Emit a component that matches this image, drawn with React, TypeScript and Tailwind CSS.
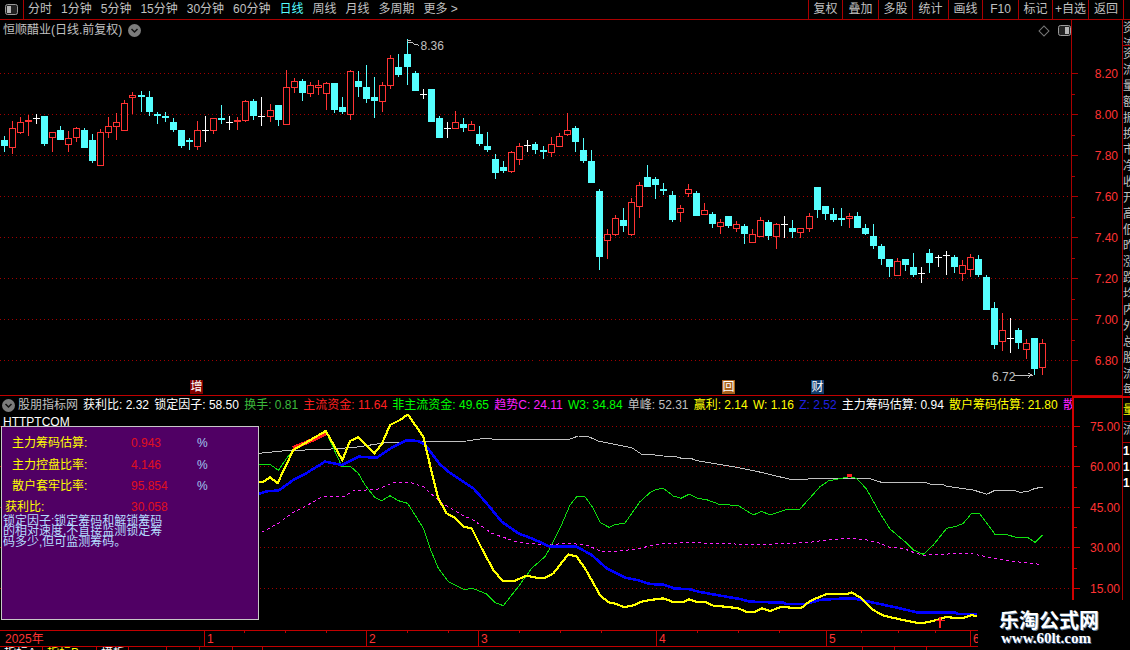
import React from 'react';

// candle rows: type, wick top, body top, body bottom, wick bottom (px in page coords)
type Candle = ['c' | 'r' | 'w', number, number, number, number];

const CANDLES: Candle[] = [
  ['c',136,140,146,152],['r',121,128,148,154],['r',117,122,133,134],['r',115,120,122,136],['w',114,118,118,124],
  ['c',116,116,144,146],['r',132,132,138,152],['c',126,130,140,140],['r',131,138,145,152],['r',127,128,138,142],
  ['c',128,130,148,148],['c',134,140,161,163],['r',129,132,166,166],['r',117,126,133,138],['r',113,122,127,140],
  ['r',100,103,131,131],['r',92,95,98,114],['c',91,95,97,112],['c',91,97,112,116],['c',112,114,116,124],
  ['c',112,116,118,122],['c',118,122,130,132],['c',130,130,146,148],['c',138,140,142,150],['r',121,130,147,150],
  ['w',116,130,130,142],['r',118,118,131,134],['c',105,118,120,124],['w',116,122,122,130],['r',117,120,122,130],
  ['r',100,101,121,122],['c',99,101,116,120],['w',97,116,116,126],['r',104,110,117,122],['c',105,105,120,126],
  ['r',70,87,125,125],['r',78,81,88,93],['c',79,81,93,101],['r',82,85,94,97],['r',80,85,88,95],
  ['r',82,83,94,110],['c',83,83,110,113],['c',97,107,112,114],['r',70,71,115,120],['c',71,81,87,97],
  ['c',65,87,99,103],['c',77,97,101,118],['r',82,85,102,112],['r',55,58,86,89],['c',54,67,75,77],
  ['c',39,54,67,85],['c',71,73,91,91],['w',89,94,94,99],['c',89,89,122,122],['c',116,118,138,138],
  ['w',122,128,128,138],['r',111,122,129,129],['c',118,124,128,132],['r',121,124,131,131],['c',126,134,144,146],
  ['c',132,146,150,152],['c',154,159,173,179],['c',161,167,171,173],['r',151,152,172,173],['r',143,146,160,165],
  ['w',140,145,145,152],['c',142,144,150,154],['c',146,150,152,159],['r',137,144,153,157],['r',133,136,147,147],
  ['r',113,130,135,136],['c',126,128,142,152],['c',138,150,161,163],['c',150,161,183,183],['c',189,191,257,270],
  ['r',229,234,241,259],['r',215,218,235,236],['c',208,220,226,232],['r',198,202,235,236],['r',182,185,207,218],
  ['c',165,177,187,187],['c',177,179,185,199],['c',183,189,191,195],['c',191,195,220,222],['r',205,208,213,222],
  ['r',184,189,194,197],['c',191,193,216,216],['r',203,210,215,215],['c',212,214,224,228],['r',219,222,227,234],
  ['c',216,216,226,228],['r',221,224,229,232],['c',224,226,234,244],['r',229,234,243,243],['r',217,220,237,237],
  ['c',220,222,236,240],['r',223,224,237,249],['w',216,224,224,238],['c',220,228,232,238],['r',228,228,233,238],
  ['r',213,216,229,232],['c',187,187,210,218],['c',206,206,214,220],['c',208,214,220,222],['c',208,218,220,226],
  ['r',213,216,219,228],['c',212,216,228,228],['c',224,228,234,235],['c',224,236,246,249],['c',244,246,259,265],
  ['c',259,259,267,277],['r',258,261,276,276],['c',259,259,265,271],['c',253,267,275,277],['w',267,273,273,283],
  ['c',249,253,263,273],['w',255,257,257,267],['w',251,255,255,275],['c',255,257,267,273],['r',260,265,274,281],
  ['r',254,257,270,277],['c',255,259,275,277],['c',275,277,310,310],['c',302,308,345,349],['r',313,330,342,351],
  ['w',318,338,338,353],['c',328,330,343,349],['r',339,343,350,359],['c',338,338,369,375],['r',339,343,368,375],
];

const JUMPS = [17, 33, 50, 67, 83, 100, 116];
const candleLeft = (k: number) => 1 + 8 * k + JUMPS.filter((j) => j <= k).length;

const toPts = (raw: number[], ox: number, oy: number) => {
  const out: [number, number][] = [];
  for (let i = 0; i < raw.length; i += 2) out.push([ox + raw[i] / 3, oy + raw[i + 1] / 3]);
  return out;
};

// two traced halves of each line, left from x=255 and right from x=650
const series = (a: number[], b: number[]) => {
  const left = toPts(a, 255, 405).filter((p) => p[0] < 650);
  return [...left, ...toPts(b, 650, 430)].map((p) => p.join(',')).join(' ');
};

const GRAY = series(
  [10,145,30,143,50,141,100,136,200,134,300,127,400,112,500,110,635,108,690,100,710,102,945,102,970,93,1000,95,1030,108,1080,118,1130,128,1160,148,1200,152],
  [0,73,40,78,75,79,95,85,125,86,140,92,195,101,250,110,320,124,400,143,420,148,470,148,480,145,655,145,695,157,825,157,840,162,880,164,890,169,970,180,1010,193,1035,181,1090,181,1110,187,1135,184,1155,175,1178,172]
);
const GREEN = series(
  [10,178,30,180,45,178,70,196,95,160,115,135,130,128,205,85,215,85,260,183,285,183,310,205,330,240,360,278,380,287,405,272,430,287,458,295,480,330,505,370,525,430,550,490,580,530,630,555,650,549,695,567,720,593,745,602,790,545,830,490,870,455,885,430,915,370,945,300,965,275,990,275,1015,310,1035,352,1062,367,1080,359,1110,354,1155,290,1200,255],
  [0,188,20,178,40,175,70,198,93,205,118,192,143,205,170,209,205,222,265,227,310,255,335,244,360,255,405,240,450,237,510,170,535,153,560,148,600,140,620,145,650,178,690,250,720,297,765,335,790,360,820,373,850,345,890,295,915,290,940,280,965,250,990,252,1035,313,1065,313,1100,322,1132,322,1155,337,1178,315]
);
const YELLOW = series(
  [10,230,25,230,45,217,68,234,115,135,212,78,262,165,285,108,310,96,358,145,380,118,405,60,435,45,458,28,505,95,525,180,550,280,575,325,600,338,625,365,650,370,680,430,715,495,742,527,780,527,815,512,845,518,870,518,895,505,940,448,965,455,990,490,1035,570,1060,592,1085,597,1105,606,1130,603,1160,590,1200,584],
  [0,510,40,505,70,516,100,516,118,508,140,516,165,516,190,527,225,530,265,535,290,546,315,546,335,535,360,543,395,530,420,533,455,533,480,513,530,492,590,492,605,487,630,502,670,540,700,557,750,568,800,578,825,578,860,570,890,560,910,564,940,564,965,555,980,560]
);
const BLUE = series(
  [10,267,40,258,70,257,115,225,150,207,210,170,260,180,310,155,365,158,410,128,455,106,490,108,510,118,555,178,580,200,655,250,695,295,740,350,790,385,830,400,885,425,965,425,1010,450,1055,490,1110,518,1150,526,1185,536,1200,536],
  [0,462,40,464,75,476,115,477,150,486,200,495,270,507,300,515,400,518,410,522,465,522,510,510,550,507,610,505,680,520,750,535,800,547,915,548,925,552,980,552]
);
const MAGENTA = series(
  [20,382,75,352,110,325,150,305,200,276,265,275,295,258,370,252,420,232,465,232,505,245,555,290,620,330,655,345,710,385,790,412,880,420,940,414,1000,422,1040,440,1090,438,1140,433,1200,420],
  [5,347,30,341,120,338,230,341,300,344,400,341,470,338,530,330,600,325,650,330,690,340,720,352,760,355,790,367,820,376,860,373,960,370,1030,384,1080,393,1170,403]
);

const TABS = ['分时', '1分钟', '5分钟', '15分钟', '30分钟', '60分钟', '日线', '周线', '月线', '多周期', '更多 >'];

const TOOLS = [
  { label: '复权', cls: 'w-[34px]' },
  { label: '叠加', cls: 'w-[36px]' },
  { label: '多股', cls: 'w-[34px]' },
  { label: '统计', cls: 'w-[36px]' },
  { label: '画线', cls: 'w-[34px]' },
  { label: 'F10', cls: 'w-[36px]' },
  { label: '标记', cls: 'w-[34px]' },
  { label: '+自选', cls: 'w-[36px]' },
  { label: '返回', cls: 'w-[36px] border-r' },
];

const LEGEND = [
  { text: '获利比: 2.32', cls: 'text-white' },
  { text: '锁定因子: 58.50', cls: 'text-white' },
  { text: '换手: 0.81', cls: 'text-[#3cb83c]' },
  { text: '主流资金: 11.64', cls: 'text-[#ff2020]' },
  { text: '非主流资金: 49.65', cls: 'text-[#00ff00]' },
  { text: '趋势C: 24.11', cls: 'text-[#ff20ff]' },
  { text: 'W3: 34.84', cls: 'text-[#00ff00]' },
  { text: '单峰: 52.31', cls: 'text-[#c0c0c0]' },
  { text: '赢利: 2.14', cls: 'text-[#ffff00]' },
  { text: 'W: 1.16', cls: 'text-[#ffff00]' },
  { text: 'Z: 2.52', cls: 'text-[#2020e0]' },
  { text: '主力筹码估算: 0.94', cls: 'text-white' },
  { text: '散户筹码估算: 21.80', cls: 'text-[#ffff00]' },
  { text: '散户', cls: 'text-[#ff20ff]' },
];

const STATS = [
  { label: '主力筹码估算:', value: '0.943' },
  { label: '主力控盘比率:', value: '4.146' },
  { label: '散户套牢比率:', value: '95.854' },
];

const MONTHS = [
  { x: 204, label: '1' },
  { x: 366, label: '2' },
  { x: 478, label: '3' },
  { x: 656, label: '4' },
  { x: 826, label: '5' },
  { x: 970, label: '6' },
];

const FOOT_CELLS = [
  { w: 'w-[43px]', text: '指标A', cls: 'text-white' },
  { w: 'w-[54px]', text: '指标B', cls: 'text-[#ffff00]' },
  { w: 'w-[32px]', text: '模板', cls: 'text-white' },
  { w: 'w-[38px]', text: '', cls: '' },
  { w: 'w-[33px]', text: '', cls: '' },
  { w: 'w-[33px]', text: '', cls: '' },
  { w: 'w-[30px]', text: '', cls: '' },
  { w: 'w-[600px]', text: '', cls: '' },
  { w: 'w-[32px]', text: '', cls: '' },
  { w: 'w-[32px]', text: '', cls: 'text-[#55ffff]' },
];

const PanelIcon = ({ side }: { side: 'left' | 'right' }) => (
  <svg width="13" height="11" viewBox="0 0 13 11">
    <rect x="0.5" y="0.5" width="12" height="10" rx="2" fill="#222" stroke="#9a9a9a" />
    <rect x={side === 'left' ? 2 : 7} y="2" width="4" height="7" fill="#b5b5b5" />
  </svg>
);

const Chevron = () => (
  <svg width="13" height="13" viewBox="0 0 13 13" className="shrink-0">
    <circle cx="6.5" cy="6.5" r="6.5" fill="#7c7c7c" />
    <path d="M3.5 5l3 3 3-3" fill="none" stroke="#111" strokeWidth="1.5" />
  </svg>
);

const GridLines = ({ ys }: { ys: number[] }) => (
  <g>
    {ys.map((y) => (
      <line key={y} x1="0" x2="1072" y1={y + 0.5} y2={y + 0.5} stroke="#a00000" strokeDasharray="1 3" />
    ))}
  </g>
);

const CandleChart = () => (
  <svg width="1072" height="375" viewBox="0 20 1072 375" className="block" shapeRendering="crispEdges">
    <GridLines ys={[73, 114, 155, 196, 237, 278, 319, 360]} />
    {CANDLES.map(([type, wt, bt, bb, wb], k) => {
      const x = candleLeft(k);
      const color = type === 'c' ? '#55ffff' : type === 'r' ? '#ff3333' : '#ffffff';
      return (
        <g key={k}>
          <rect x={x + 3} y={wt} width="1" height={wb - wt} fill={color} />
          {type === 'c' && <rect x={x} y={bt} width="7" height={bb - bt} fill={color} />}
          {type === 'r' && (
            <rect x={x + 0.5} y={bt + 0.5} width="6" height={bb - bt - 1} fill="#000" stroke={color} />
          )}
          {type === 'w' && <rect x={x} y={bt} width="7" height="1" fill={color} />}
        </g>
      );
    })}
    <rect x="407" y="40" width="4" height="1" fill="#c0c0c0" />
    <polyline points="408,43 412,42 415,44 419,45" fill="none" stroke="#c0c0c0" />
    <text x="421" y="50" fontSize="12" fill="#c0c0c0" shapeRendering="auto">8.36</text>
    <text x="993" y="381" fontSize="12" fill="#c0c0c0">6.72</text>
    <line x1="1015" x2="1034" y1="375.5" y2="375.5" stroke="#c0c0c0" />
    <polyline points="1029,373 1033,375 1029,378" fill="none" stroke="#c0c0c0" />
  </svg>
);

const IndicatorChart = () => (
  <svg width="1072" height="216" viewBox="0 414 1072 216" className="block" shapeRendering="crispEdges">
    <GridLines ys={[426, 466, 507, 547, 588]} />
    <polyline points={GRAY} fill="none" stroke="#c0c0c0" />
    <polyline points={MAGENTA} fill="none" stroke="#ff20ff" strokeDasharray="3 3" />
    <polyline points={GREEN} fill="none" stroke="#10e010" />
    <polyline points="293,448 310,441 327,433" fill="none" stroke="#ff2020" strokeWidth="4" />
    <polyline points={BLUE} fill="none" stroke="#0000ff" strokeWidth="2.6" />
    <polyline points={YELLOW} fill="none" stroke="#ffff00" strokeWidth="2.2" />
    <rect x="847" y="474" width="5" height="3" fill="#ff2020" />
    <rect x="939" y="617" width="2" height="11" fill="#ff2020" />
    <rect x="936" y="620" width="9" height="1" fill="#ff2020" />
  </svg>
);

const Axis = ({ labels, viewY, height, active }: { labels: { y: number; text: string }[]; viewY: number; height: number; active?: boolean }) => (
  <svg width="50" height={height} viewBox={`1072 ${viewY} 50 ${height}`} className="block">
    {labels.map((l, i) => (
      <g key={l.text}>
        <rect x="1072" y={l.y} width="6" height="1" fill={active ? '#d00000' : '#aa0000'} />
        <text x="1118" y={l.y + 4.5} fontSize="12" textAnchor="end" fill="#ff3333">{l.text}</text>
        {i < labels.length - 1 && (
          <rect x="1072" y={Math.round((l.y + labels[i + 1].y) / 2)} width="3" height="1" fill={active ? '#d00000' : '#aa0000'} />
        )}
      </g>
    ))}
  </svg>
);

const Badge = ({ cls, ch }: { cls: string; ch: string }) => (
  <span className={`flex h-[14px] w-[13px] items-center justify-center text-[12px] leading-[14px] text-white ${cls}`}>{ch}</span>
);

const SIDE_GLYPHS = ['资', '流', '量', '额', '振', '换', '市', '净', '收', '开', '高', '低', '昨', '涨', '跌', '均', '内', '外', '总', '股', '流', '每'];

export default function App() {
  return (
    <div className="relative flex h-[650px] w-[1130px] flex-col overflow-hidden bg-black font-['Liberation_Sans','Noto_Sans_CJK_SC',sans-serif] text-[12px] text-[#c0c0c0]">
      {/* top toolbar */}
      <div className="flex h-[20px] shrink-0 border-b border-[#aa0000] leading-[19px]">
        <div className="flex w-[24px] shrink-0 items-center justify-center border-r border-[#aa0000]">
          <PanelIcon side="left" />
        </div>
        <div className="flex gap-[9px] pl-[4px]">
          {TABS.map((t) => (
            <span key={t} className={t === '日线' ? 'text-[#55ffff]' : ''}>{t}</span>
          ))}
        </div>
        <div className="ml-auto mr-[6px] flex">
          {TOOLS.map((t) => (
            <div key={t.label} className={`border-l border-[#aa0000] text-center ${t.cls}`}>{t.label}</div>
          ))}
        </div>
      </div>

      <div className="flex min-h-0 flex-1">
        <div className="w-[1123px] shrink-0 border-r border-[#aa0000]">
          {/* price panel */}
          <div className="relative flex h-[376px] border-b border-[#c00000]">
            <CandleChart />
            <div className="border-l border-[#aa0000]">
              <Axis
                viewY={20}
                height={375}
                labels={[
                  { y: 73, text: '8.20' },
                  { y: 114, text: '8.00' },
                  { y: 155, text: '7.80' },
                  { y: 196, text: '7.60' },
                  { y: 237, text: '7.40' },
                  { y: 278, text: '7.20' },
                  { y: 319, text: '7.00' },
                  { y: 360, text: '6.80' },
                ]}
              />
            </div>
            <div className="absolute left-[3px] top-[2px] flex items-center gap-[6px] leading-[16px]">
              <span>恒顺醋业(日线.前复权)</span>
              <Chevron />
            </div>
            <div className="absolute right-[51px] top-[5px] flex items-center gap-[8px]">
              <span className="mr-[2px] block h-[8px] w-[8px] rotate-45 border border-[#777]" />
              <PanelIcon side="right" />
            </div>
            <div className="absolute left-[190px] top-[360px]"><Badge cls="bg-[#800000]" ch="增" /></div>
            <div className="absolute left-[722px] top-[360px]"><Badge cls="bg-[#a8601c]" ch="回" /></div>
            <div className="absolute left-[811px] top-[360px]"><Badge cls="bg-[#123e6e]" ch="财" /></div>
          </div>

          {/* indicator panel */}
          <div className="relative flex h-[234px]">
            <div className="w-[1072px] shrink-0">
              <div className="flex h-[18px] items-center overflow-hidden whitespace-nowrap leading-[18px]">
                <span className="ml-[2px] mr-[3px]"><Chevron /></span>
                <span className="mr-[5px]">股朋指标网</span>
                <div className="flex gap-[5.2px]">
                  {LEGEND.map((l) => (
                    <span key={l.text} className={l.cls}>{l.text}</span>
                  ))}
                </div>
              </div>
              <IndicatorChart />
            </div>
            <div className="border-l-2 border-t-2 border-[#d00000]">
              <Axis
                active
                viewY={398}
                height={232}
                labels={[
                  { y: 426, text: '75.00' },
                  { y: 466, text: '60.00' },
                  { y: 507, text: '45.00' },
                  { y: 547, text: '30.00' },
                  { y: 588, text: '15.00' },
                ]}
              />
            </div>
            <span className="absolute left-[3px] top-[18px] leading-[16px] text-white">HTTPTCOM</span>
            <div className="absolute left-[1px] top-[30px] h-[194px] w-[258px] overflow-hidden border border-[#c8c8c8] bg-[#500064] pt-[6px]">
              {STATS.map((s) => (
                <div key={s.label} className="flex pl-[10px] leading-[21.5px]">
                  <span className="w-[119px] text-[#ffff00]">{s.label}</span>
                  <span className="w-[66px] text-[#e01020]">{s.value}</span>
                  <span className="text-[#a0c8f0]">%</span>
                </div>
              ))}
              <div className="flex pl-[3px] leading-[18px]">
                <span className="w-[126px] text-[#ffff00]">获利比:</span>
                <span className="text-[#e01020]">30.058</span>
              </div>
              <div className="pl-[1px] leading-[10.5px] text-[#b4dcff]">
                <div>锁定因子:锁定筹码和解锁筹码</div>
                <div>的相对速度,不直接监测锁定筹</div>
                <div>码多少,但可监测筹码。</div>
              </div>
            </div>
          </div>

          {/* date axis */}
          <svg width="1122" height="17" viewBox="0 630 1122 17" className="block">
            <rect x="0" y="630" width="1122" height="1" fill="#c00000" />
            <rect x="0" y="646" width="1122" height="1" fill="#c00000" />
            {[244, 285, 326, 407, 448, 519, 560, 601, 697, 738, 779, 861, 898, 935].map((x) => (
              <rect key={x} x={x} y="631" width="1" height="2" fill="#c00000" />
            ))}
            <text x="5" y="643" fontSize="12" fill="#ff3333">2025年</text>
            {MONTHS.map((m) => (
              <g key={m.x}>
                <rect x={m.x} y="631" width="1" height="15" fill="#c00000" />
                <text x={m.x + 3} y="643" fontSize="12" fill="#ff3333">{m.label}</text>
              </g>
            ))}
          </svg>

          {/* bottom tabs, only their top edge is visible */}
          <div className="flex h-[3px] overflow-hidden">
            {FOOT_CELLS.map((c, i) => (
              <div key={i} className={`h-[3px] shrink-0 border-r border-[#c00000] pl-[4px] leading-[12px] ${c.w} ${c.cls}`}>{c.text}</div>
            ))}
          </div>
        </div>

        {/* clipped info column on the far right */}
        <div className="flex-1 overflow-hidden leading-[16px]">
          <div className="h-[26px] overflow-hidden border-b border-[#aa0000] whitespace-nowrap">
            {SIDE_GLYPHS.slice(0, 2).map((g, i) => <div key={i}>{g}</div>)}
          </div>
          <div className="h-[350px] overflow-hidden">
            {SIDE_GLYPHS.map((g, i) => <div key={i}>{g}</div>)}
          </div>
          <div className="border-t-2 border-[#d00000] text-[#ffff00]">
            <div className="h-[24px] border-b border-[#aa0000] leading-[24px]">量</div>
            <div className="h-[21px] border-b border-[#aa0000] text-[#c0c0c0]">流</div>
            <div className="font-bold text-white">1</div>
            <div className="font-bold text-white">1</div>
            <div className="font-bold text-white">1</div>
          </div>
        </div>
      </div>

      {/* site watermark pasted over the corner */}
      <div className="absolute left-[978px] top-[600px] flex h-[50px] w-[152px] flex-col items-start bg-black pl-[21px] pt-[9px] text-white">
        <span className="font-['Noto_Sans_CJK_SC',sans-serif] text-[20px] font-bold leading-[22px] [text-shadow:1px_1px_0_#5a7a9a]">乐淘公式网</span>
        <span className="ml-[2px] mt-[-1px] font-['Liberation_Serif',serif] text-[15px] font-bold leading-[17px] [text-shadow:1px_1px_0_#3a5a8a]">www.60lt.com</span>
      </div>
    </div>
  );
}
